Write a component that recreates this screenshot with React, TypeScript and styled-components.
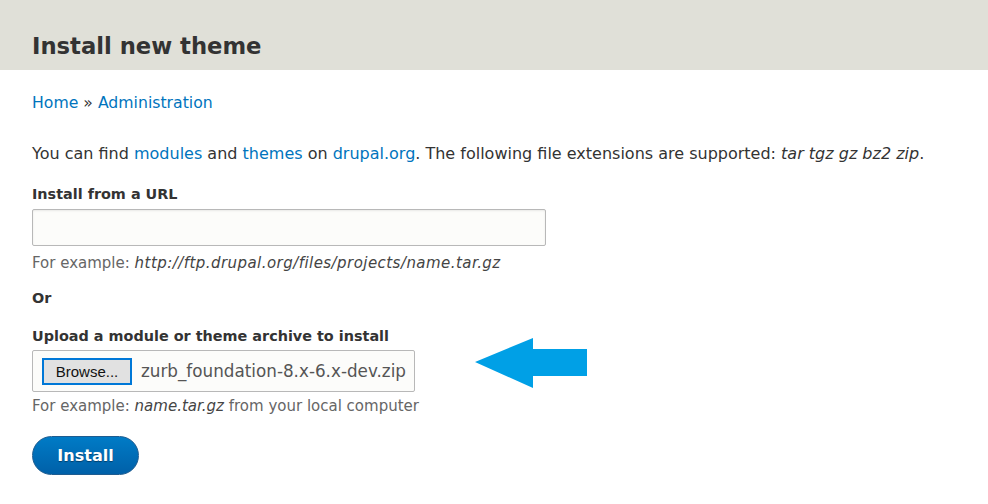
import React from "react";
import styled, { createGlobalStyle } from "styled-components";

const GlobalStyle = createGlobalStyle`
  html, body {
    margin: 0;
    padding: 0;
    background: #fff;
  }
  body {
    font-family: "DejaVu Sans", Verdana, sans-serif;
    color: #333;
  }
`;

const Header = styled.header`
  background: #e0e0d8;
  height: 70px;
  padding: 0 32px;
  display: flex;
  align-items: flex-end;
`;

const Title = styled.h1`
  margin: 0 0 9px;
  font-size: 22.7px;
  line-height: 30px;
  font-weight: 700;
  color: #333;
`;

const Content = styled.main`
  padding: 23px 32px 0;
`;

const Link = styled.a`
  color: #0074bd;
  text-decoration: none;
`;

const Breadcrumb = styled.nav`
  font-size: 15.7px;
  line-height: 20px;
  color: #333;
  margin-bottom: 31px;
`;

const Intro = styled.p`
  margin: 0 0 21px;
  font-size: 16px;
  line-height: 20px;
`;

const Field = styled.div<{ gap?: number }>`
  margin-bottom: ${(p) => p.gap ?? 0}px;
`;

const Label = styled.div<{ space?: number }>`
  font-size: 14.4px;
  font-weight: 700;
  line-height: 18px;
  margin-bottom: ${(p) => p.space ?? 0}px;
`;

const TextInput = styled.input`
  display: block;
  box-sizing: border-box;
  width: 514px;
  height: 37px;
  background: #fcfcfa;
  border: 1px solid #b8b8b8;
  border-radius: 2px;
  box-shadow: inset 0 1px 2px rgba(0, 0, 0, 0.08);
`;

const Description = styled.div<{ space: number }>`
  margin-top: ${(p) => p.space}px;
  font-size: 15px;
  line-height: 18px;
  color: #666;
`;

const Example = styled.em<{ spread?: number }>`
  color: #444;
  letter-spacing: ${(p) => p.spread ?? 0}px;
`;

const UploadRow = styled.div`
  display: flex;
  align-items: flex-start;
  gap: 60px;
`;

const FileBox = styled.div`
  box-sizing: border-box;
  width: 383px;
  height: 42px;
  display: flex;
  align-items: center;
  gap: 9px;
  padding: 0 8px 0 9px;
  background: #fcfcfa;
  border: 1px solid #b8b8b8;
  border-radius: 2px;
`;

const BrowseButton = styled.button`
  box-sizing: border-box;
  width: 91px;
  height: 27px;
  padding: 0;
  background: #e1e1e1;
  border: 2px solid #0078d7;
  font-family: "Liberation Sans", Arial, sans-serif;
  font-size: 15px;
  color: #111;
`;

const FileName = styled.span`
  font-size: 16.8px;
  color: #555;
  white-space: nowrap;
`;

const ArrowMark = styled.svg`
  display: block;
  margin-top: -12px;
`;

const InstallButton = styled.button`
  box-sizing: border-box;
  width: 107px;
  height: 39px;
  border-radius: 20px;
  border: 1px solid #1e5c90;
  background: linear-gradient(#007bc6, #0060a8);
  color: #fff;
  font-family: "DejaVu Sans", Verdana, sans-serif;
  font-weight: 700;
  font-size: 16px;
  text-shadow: 0 1px 1px rgba(0, 0, 0, 0.4);
`;

const Arrow = () => (
  <ArrowMark width="113" height="51" viewBox="0 0 113 51">
    <polygon points="0,24 58,0 58,11 112,11 112,38 58,38 58,50" fill="#00a0e6" />
  </ArrowMark>
);

const App = () => (
  <>
    <GlobalStyle />
    <Header>
      <Title>Install new theme</Title>
    </Header>
    <Content>
      <Breadcrumb>
        <Link href="#">Home</Link> » <Link href="#">Administration</Link>
      </Breadcrumb>
      <Intro>
        You can find <Link href="#">modules</Link> and <Link href="#">themes</Link> on{" "}
        <Link href="#">drupal.org</Link>. The following file extensions are supported:{" "}
        <em>tar tgz gz bz2 zip</em>.
      </Intro>
      <Field gap={17}>
        <Label space={6}>Install from a URL</Label>
        <TextInput type="text" />
        <Description space={8}>
          For example: <Example spread={0.45}>http://ftp.drupal.org/files/projects/name.tar.gz</Example>
        </Description>
      </Field>
      <Field gap={20}>
        <Label>Or</Label>
      </Field>
      <Field gap={21}>
        <Label space={5}>Upload a module or theme archive to install</Label>
        <UploadRow>
          <FileBox>
            <BrowseButton>Browse...</BrowseButton>
            <FileName>zurb_foundation-8.x-6.x-dev.zip</FileName>
          </FileBox>
          <Arrow />
        </UploadRow>
        <Description space={5}>
          For example: <Example>name.tar.gz</Example> from your local computer
        </Description>
      </Field>
      <InstallButton>Install</InstallButton>
    </Content>
  </>
);

export default App;
